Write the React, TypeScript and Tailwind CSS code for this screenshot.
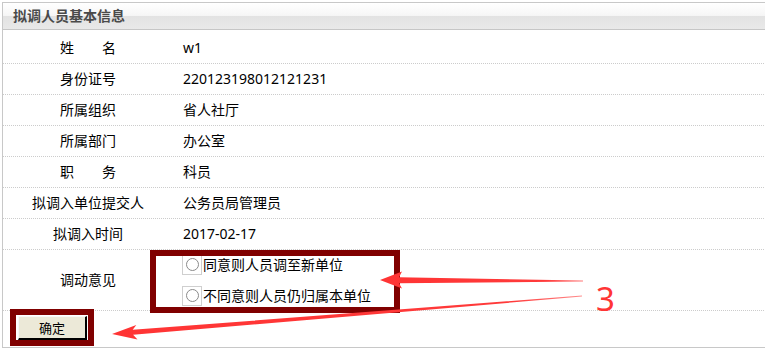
import React from "react";

const rows: { label: string; value: string }[] = [
  { label: "姓\u3000\u3000名", value: "w1" },
  { label: "身份证号", value: "220123198012121231" },
  { label: "所属组织", value: "省人社厅" },
  { label: "所属部门", value: "办公室" },
  { label: "职\u3000\u3000务", value: "科员" },
  { label: "拟调入单位提交人", value: "公务员局管理员" },
  { label: "拟调入时间", value: "2017-02-17" },
];

function Radio({ text }: { text: string }) {
  return (
    <div className="flex h-[20px] items-center">
      <span className="flex h-[20px] w-[20px] items-center justify-center border border-[#cfcfcf] bg-white">
        <span className="h-[13px] w-[13px] rounded-full border border-[#8a8a8a] bg-white" />
      </span>
      <span className="ml-[1px] leading-[20px]">{text}</span>
    </div>
  );
}

export default function App() {
  return (
    <div className="relative h-[352px] w-[765px] overflow-hidden bg-white font-['Noto_Sans','Noto_Sans_CJK_SC',sans-serif] text-[14px] text-black">
      <div className="ml-[2px] mt-[2px] w-[800px] border-b border-l border-t border-[#c8c8c8]">
        {/* header */}
        <div className="flex h-[27px] items-center border-b border-[#c6c6c6] bg-[linear-gradient(to_bottom,#ffffff_0%,#f6f6f6_48%,#e2e2e2_50%,#e9e9e9_100%)] pl-[10px]">
          <span className="text-[14px] font-bold leading-[20px] text-[#4a4a4a]">拟调人员基本信息</span>
        </div>
        <div className="h-[2px]" />
        {rows.map((r, i) => (
          <div
            key={i}
            className={`flex items-center border-b border-dotted border-[#cccccc] ${i === 0 ? "h-[32px]" : "h-[31px]"}`}
          >
            <div className="w-[170px] shrink-0 text-center leading-[20px]">{r.label}</div>
            <div className="pl-[10px] leading-[20px]">{r.value}</div>
          </div>
        ))}
        <div className="flex h-[61px] items-center border-b border-dotted border-[#cccccc]">
          <div className="w-[170px] shrink-0 text-center leading-[20px]">调动意见</div>
          <div className="flex flex-col gap-[11px] pl-[9px]">
            <Radio text="同意则人员调至新单位" />
            <Radio text="不同意则人员仍归属本单位" />
          </div>
        </div>
        <div className="h-[36px] pl-[15px] pt-[5px]">
          <button className="flex h-[24px] w-[69px] items-center justify-center border-b-2 border-l border-r-2 border-t border-b-black border-l-[#f8f8f8] border-r-black border-t-[#f8f8f8] bg-[#ece9d8] text-[13px] leading-[18px] text-black">
            确定
          </button>
        </div>
      </div>

      {/* annotation boxes */}
      <div className="pointer-events-none absolute left-[150px] top-[250px] h-[63px] w-[250px] border-[6px] border-[#800000]" />
      <div className="pointer-events-none absolute left-[10px] top-[309px] h-[37px] w-[84px] border-[6px] border-[#800000]" />

      {/* arrows */}
      <svg className="pointer-events-none absolute left-0 top-0" width="765" height="352" viewBox="0 0 765 352">
        <defs>
          <linearGradient id="g1" x1="380" y1="0" x2="585" y2="0" gradientUnits="userSpaceOnUse">
            <stop offset="0" stopColor="#ff3434" />
            <stop offset="0.8" stopColor="#ff3a3a" />
            <stop offset="1" stopColor="#ff8080" />
          </linearGradient>
          <linearGradient id="g2" x1="112" y1="0" x2="584" y2="0" gradientUnits="userSpaceOnUse">
            <stop offset="0" stopColor="#ff3434" />
            <stop offset="0.85" stopColor="#ff3a3a" />
            <stop offset="1" stopColor="#ff9090" />
          </linearGradient>
        </defs>
        <polygon
          points="380,280 402,271.5 399,277.3 583,280.5 583,281.5 399,283.2 402,288.5"
          fill="url(#g1)"
        />
        <polygon
          points="112,334 136.3,325 132.7,329.8 582,295.5 582,296.5 133.1,334.8 137.5,339.5"
          fill="url(#g2)"
        />
      </svg>
      <div className="pointer-events-none absolute left-[596px] top-[279px] font-['Noto_Sans',sans-serif] text-[33px] leading-[40px] text-[#ff3535]">
        3
      </div>
    </div>
  );
}
